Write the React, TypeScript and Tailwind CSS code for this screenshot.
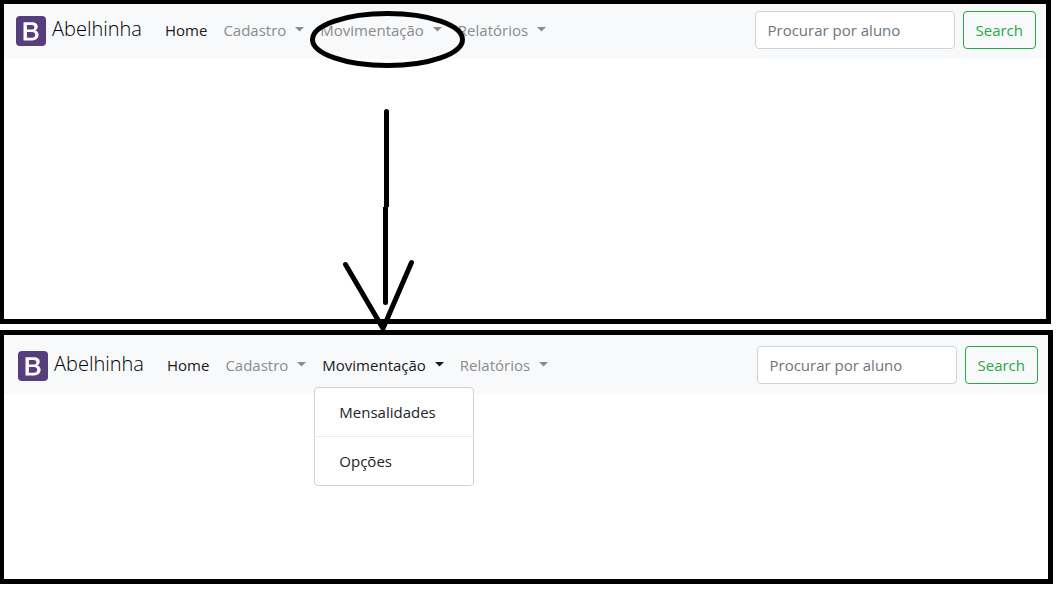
import React from "react";

type MenuName = "Cadastro" | "Movimentação" | "Relatórios";

const menus: MenuName[] = ["Cadastro", "Movimentação", "Relatórios"];

function Logo() {
  return (
    <svg viewBox="0 0 30 30" className="size-[30px] shrink-0" aria-hidden="true">
      <rect width="30" height="30" rx="4" fill="#563d7c" />
      <path
        fill="#fff"
        fillRule="evenodd"
        d="M7.500 6.300h8.700c3.300 0 5.500 1.700 5.500 4.400 0 1.800-.9 3.100-2.500 3.700 2.200.5 3.400 2 3.400 4.200 0 3.700-2.500 5.900-6.400 5.900H7.500zM10.900 9v4.500h4.600c1.900 0 2.900-.8 2.900-2.300s-1-2.200-2.900-2.200zM10.900 16v5.700h5.100c2.100 0 3.200-1 3.200-2.900s-1.100-2.800-3.200-2.800z"
      />
    </svg>
  );
}

function Caret() {
  return (
    <svg viewBox="0 0 9 5" className="mb-0.5 ml-[9px] h-[5px] w-[9px]" fill="currentColor" aria-hidden="true">
      <path d="M0 0h9L4.500 4.500z" />
    </svg>
  );
}

function DropdownMenu() {
  return (
    <ul className="absolute top-full left-0 z-10 mt-0.5 w-40 rounded border border-[#d0d3d6] bg-white text-[#212529]">
      <li className="border-b border-[#e9ecef]">
        <a href="#mensalidades" className="block px-6 py-3">Mensalidades</a>
      </li>
      <li>
        <a href="#opcoes" className="block px-6 py-3">Opções</a>
      </li>
    </ul>
  );
}

function Navbar({ id, open, className }: { id: string; open?: MenuName; className: string }) {
  return (
    <nav className={`flex items-center bg-[#f8f9fa] pr-2.5 pb-[9px] ${className}`}>
      <a href="#inicio" className="mr-[15px] flex items-center gap-1.5 pt-0.5 text-[20px] leading-[30px] font-light text-black">
        <Logo />
        <span className="-mt-1">Abelhinha</span>
      </a>
      <ul className="flex flex-1">
        <li>
          <a href="#home" className="block p-2 text-[#1a1a1a]">Home</a>
        </li>
        {menus.map((name) => (
          <li key={name} className="relative">
            <button
              type="button"
              aria-expanded={open === name}
              className={`flex items-center p-2 ${open === name ? "text-[#1a1a1a]" : "text-[#8a8b8c]"}`}
            >
              {name}
              <Caret />
            </button>
            {open === name && <DropdownMenu />}
          </li>
        ))}
      </ul>
      <form className="flex items-center gap-2" onSubmit={(e) => e.preventDefault()}>
        <input
          id={id}
          type="search"
          aria-label="Procurar por aluno"
          placeholder="Procurar por aluno"
          className="h-[38px] w-[200px] rounded border border-[#ced4da] bg-white px-3 placeholder:text-[#6c757d]"
        />
        <button type="submit" className="h-[38px] rounded border border-[#28a745] px-3 text-[#28a745]">
          Search
        </button>
      </form>
    </nav>
  );
}

function Annotations() {
  return (
    <svg
      className="pointer-events-none absolute top-0 left-0 z-20 h-[340px] w-[480px]"
      viewBox="0 0 480 340"
      fill="none"
      stroke="#000"
      strokeWidth="5"
      strokeLinecap="round"
      strokeLinejoin="round"
      aria-hidden="true"
    >
      <ellipse cx="387.500" cy="39.500" rx="75" ry="26" />
      <path d="M386.500 111.500V205M385.500 209V302.500" />
      <path d="M386.500 204V207M385.500 207V211" strokeLinecap="butt" />
      <path d="M345.500 264.500L383 328.500L411.500 262.500" />
    </svg>
  );
}

export default function App() {
  return (
    <main className="relative flex flex-col gap-1.5 bg-white font-['Open_Sans','Noto_Sans',sans-serif] text-[15px] leading-6">
      <section className="mr-[9px] min-h-[324px] border-4 border-r-5 border-b-5 border-black">
        <Navbar id="busca-fechado" className="pt-1.5 pl-3" />
      </section>
      <section className="mr-[7px] min-h-[254px] border-5 border-l-4 border-black">
        <Navbar id="busca-aberto" open="Movimentação" className="pt-2.5 pl-3.5" />
      </section>
      <Annotations />
    </main>
  );
}
